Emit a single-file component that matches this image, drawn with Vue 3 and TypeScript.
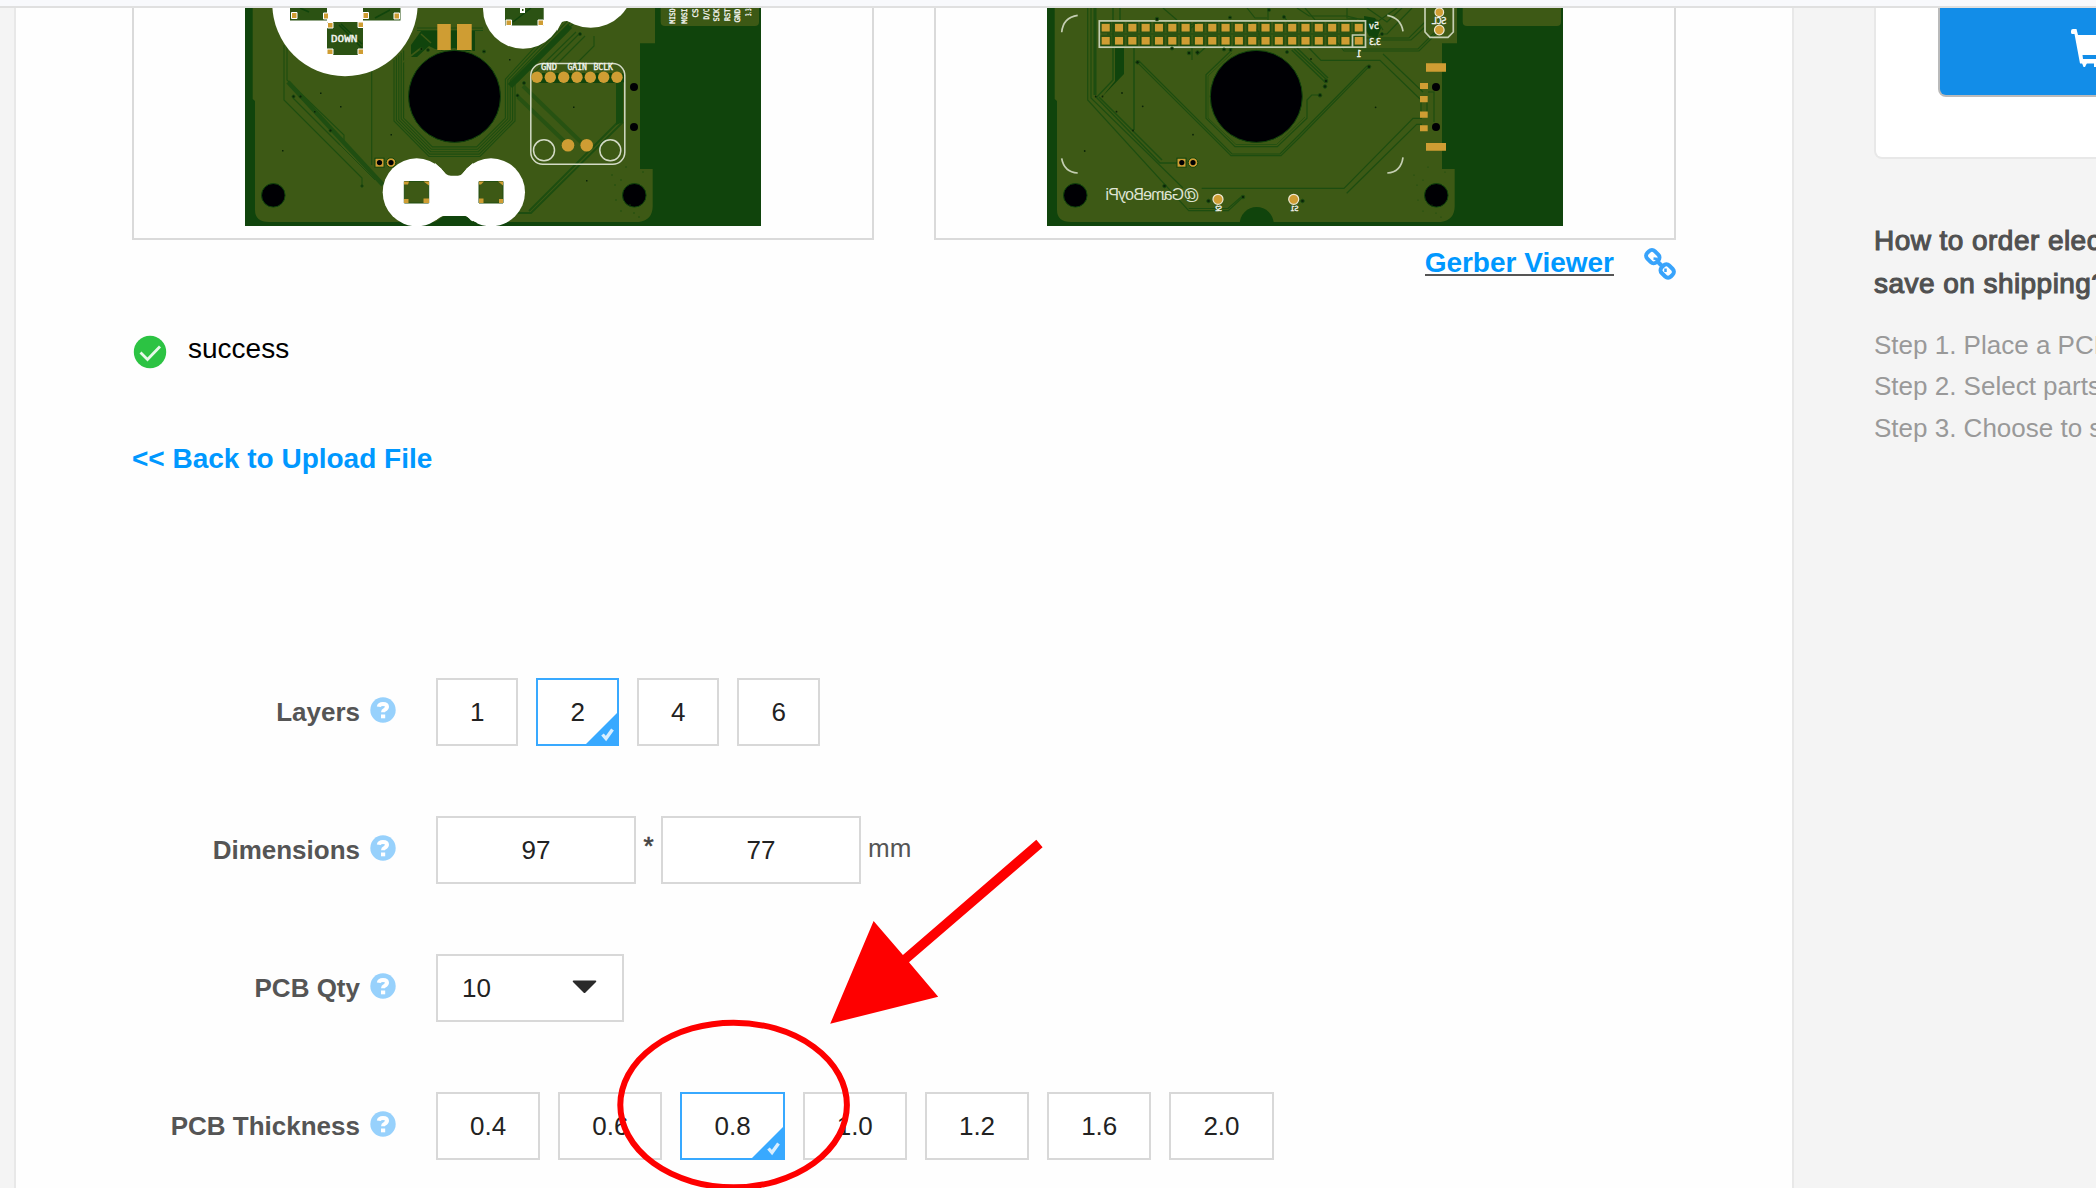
<script setup lang="ts">
interface Label { text: string; x: number; y: number; w: number }

const layers: string[] = ['1', '2', '4', '6']
const thickness: string[] = ['0.4', '0.6', '0.8', '1.0', '1.2', '1.6', '2.0']
const steps: string[] = [
  'Step 1. Place a PCB order',
  'Step 2. Select parts to buy',
  'Step 3. Choose to ship together',
]
const chosenLayer = '2'
const chosenThickness = '0.8'

const boardPath =
  'M7.7 8V99L10 101V210Q10 222 24 222H394Q407.7 220 407.7 206V169H395V43.3H410V8Z'

const octagons: string[] = [0, 2.4, 4.8, 7.2, 9.6].map(
  (d) =>
    `M${149 + d} ${60 - d}V${121 - d * 0.3}L${184 + d * 0.35} ${156.5 - d}H${235 - d * 0.35}L${270 - d} ${121 - d * 0.3}V${82 - d * 0.3}L${330 - d * 1.6} ${22 - d * 0.2}`,
)
const leftPins: string[] = ['MISO', 'MOSI', 'CS', 'D/C', 'SCK', 'RST', 'GND', '3.3']
const pinX: number[] = [430, 441.5, 452.8, 463.5, 474, 484.5, 495, 506]
const pinEnd: number[] = [23.5, 23.5, 17.5, 19.5, 21.5, 21, 22.5, 16]
const ampPads: number[] = [292, 305.3, 318.7, 332, 345.3, 358.7, 372]
const ampLabels: Label[] = [
  { text: 'GND', x: 296, y: 70.4, w: 16 },
  { text: 'GAIN', x: 322.5, y: 70.4, w: 19.5 },
  { text: 'BCLK', x: 348.5, y: 70.4, w: 19.5 },
]
const headerCols: number[] = Array.from({ length: 20 }, (_, i) => 58.7 + i * 13.32)
const vias: number[][] = [[75, 93], [95.7, 106.3], [69.5, 111.7], [37.7, 151], [146, 134.7], [86, 130.5], [48.7, 96.5], [55.5, 96.5], [264, 59], [328.6, 107.3]]
const specks: number[][] = [[367, 175], [376, 180], [370, 185], [381, 167], [398, 172], [371, 200], [376, 211], [389, 213], [394, 217], [385, 205]]
</script>

<template>
  <div class="page">
    <header class="topbar"></header>
    <div class="body">
      <main class="panel">
        <div class="boards">
          <div class="board">
            <svg width="516" height="218" viewBox="0 8 516 218">
              <rect y="8" width="516" height="218" fill="#10440c" />
              <path :d="boardPath" fill="#3d5915" />
              <path d="M415.7 8H514V22Q514 26 510 26H420Q415.7 26 415.7 22Z" fill="#3d5915" />
              <g fill="none" stroke="#1d4d10" stroke-width="1.1">
                <path v-for="o in octagons" :key="o" :d="o" />
                <path d="M126.7 70V165M39 45V100L117 178V187M42 45V80L99 135V142M48 98L95 145M172 28H238M172 30.5H238" />
                <path d="M43 82L138 185" stroke-width="4.5" stroke="#1f4e11" />
                <path d="M60 110L130 180" stroke-width="1" />
                <path d="M278 86L337 143M273 97L319 141" stroke-width="4" stroke="#275212" />
                <path d="M378 122L286 213H273M373 122L284 211" stroke-width="1.8" />
                <path d="M324 30L272 82M349 36V46L326 69M335 33L300 68M340 36L308 68M331 32L290 72" />
                <path d="M325 26L265 86" stroke-width="6" stroke="#17490f" />
              </g>
              <path d="M176 31H230V51H222L209 48L194 51L184 46L172 57H166V45Z" fill="#10440c" />
              <path d="M176 48L158 62M196 50H187L180 54M226 50L233 59H240M176 34L186 43" stroke="#3d5915" fill="none" stroke-width="1.6" />
              <rect x="288" y="73" width="92" height="10" rx="4" fill="#10440c" />
              <path d="M371 82h7v40l-7 3z" fill="#174b0f" />
              <circle cx="100" cy="3.5" r="72.7" fill="#fff" />
              <circle cx="278" cy="8.7" r="40" fill="#fff" />
              <circle cx="345.7" cy="-15" r="42.7" fill="#fff" />
              <path d="M310 8H335L331 24Q323 19 317 22Q315 25 312 31Z" fill="#fff" />
              <g fill="#2b5213">
                <path d="M45 8H82V20.5H45Z" />
                <path d="M118 8H155.5V20.5H118Z" />
                <path d="M82 22H118V55H82Z" />
                <path d="M260 8H298.7V25.5H260Z" />
              </g>
              <path d="M94 25L117 48M96 24L117 44M64 12L55 8M130 18L145 10M268 22L286 8" stroke="#10440c" stroke-width="1.5" />
              <g fill="#cf9d33" stroke="#fff" stroke-width="1">
                <path d="M46.5 12.5h5.5v6h-5.5zM78.5 13h5v6h-5zM118 12.5h5.5v6H118zM149 13h5.5v6H149zM82.5 22.5h5.5v5.5h-5.500zM113 22h5.500v5.500h-5.500zM82 49h6v5.500h-6zM113 49h5.500v5.500h-5.500zM261 20h5.500v5.500h-5.500zM293 20h5.500v5.500h-5.500z" />
              </g>
              <rect x="275" y="8" width="5" height="5" fill="#fff" /><rect x="277" y="9" width="1.500" height="2" fill="#2b5213" />
              <text x="86" y="42" class="silk" font-size="9" textLength="26.500" lengthAdjust="spacingAndGlyphs">DOWN</text>
              <path d="M192.300 24h13.500v26h-13.500zM212 24h14.700v26H212z" fill="#cf9d33" />
              <circle cx="209.500" cy="96.400" r="46" fill="#000004" stroke="#10440c" />
              <g fill="#fff">
                <circle cx="171.700" cy="192.300" r="34" />
                <circle cx="246" cy="192.300" r="34" />
                <path d="M190 163Q196 168 201 174Q203 175.700 206 175.700H213Q216 175.700 218 173Q223 167 228 163V222H226Q223 216 220 216H198Q195 217 191 220Z" />
              </g>
              <path d="M194 219.500Q197 216 200 216H219Q222 216 226 220.500L232 223H188Z" fill="#10440c" />
              <path d="M159.300 181.500h24.400V203h-24.400zM234 181.500h24V203h-24z" fill="#3d5915" stroke="#234f11" />
              <path d="M159 181.500h5l-1 3h-4zM178.500 181.500h5.500v4zM159 199h4.500v4H159zM178.500 198.500h5.500v4.500h-5.500zM234 181.500h5l-3 3h-2zM253 181.500h5v4zM234 198.500h4.500v4.500H234zM254 199h4v4h-4z" fill="#cf9d33" />
              <g fill="none" stroke="#d3dac6" stroke-width="1.500">
                <rect x="285.800" y="63.500" width="94" height="100.700" rx="12" />
                <circle cx="299" cy="150.300" r="10.500" />
                <circle cx="365.300" cy="150.300" r="10.500" />
              </g>
              <g fill="#cf9d33">
                <circle v-for="x in ampPads" :key="x" :cx="x" cy="77.300" r="5.700" />
                <circle cx="323" cy="145.300" r="6.300" />
                <circle cx="341.700" cy="145.300" r="6.300" />
              </g>
              <text v-for="l in ampLabels" :key="l.text" :x="l.x" :y="l.y" class="silk" font-size="9" :textLength="l.w" lengthAdjust="spacingAndGlyphs">{{ l.text }}</text>
              <text v-for="(p, i) in leftPins" :key="p" class="silk" font-size="7.500" :textLength="pinEnd[i] - 8.6" lengthAdjust="spacingAndGlyphs" :transform="`translate(${pinX[i]} ${pinEnd[i]}) rotate(-90)`">{{ p }}</text>
              <g class="holes">
                <rect x="130" y="158.200" width="9" height="9" fill="#cf9d33" stroke="#10440c" />
                <circle cx="146" cy="162.600" r="4.800" fill="#cf9d33" stroke="#10440c" />
                <circle cx="134.500" cy="162.600" r="2.600" />
                <circle cx="146" cy="162.600" r="2.600" />
                <circle cx="28.300" cy="195.300" r="11.800" stroke="#10440c" />
                <circle cx="389.300" cy="195.300" r="11.800" stroke="#10440c" />
                <circle cx="389" cy="87" r="4" />
                <circle cx="389" cy="127" r="4" />
                <circle v-for="s in specks" :key="s[0]" :cx="s[0]" :cy="s[1]" r=".7" fill="#164a0d" />
                <path d="M75 92.500h1.500v1.500H75zM95 106h1.500v1.500H95zM69 111h1.500v1.500H69zM37 150h1.500v1.500H37zM145.500 134h1.500v1.500h-1.500zM328 106.500h1.500v1.500H328zM341 180h1.500v1.500H341zM264 59h1.500v1.500H264z" fill="#0b2408" />
              </g>
              <g fill="#0b2408" stroke="#1d4d10">
                <circle cx="48.500" cy="96.500" r="1.500" /><circle cx="55.500" cy="96.500" r="1.500" /><circle cx="85.500" cy="130.500" r="1.500" />
                <circle cx="117" cy="186" r="1.200" /><circle cx="176.500" cy="49" r="1.500" /><circle cx="183" cy="50" r="1.500" /><circle cx="239" cy="51.500" r="1.500" />
                <circle cx="279" cy="83" r="1.500" /><circle cx="272.500" cy="95.500" r="1.500" /><circle cx="335" cy="34" r="1.500" />
              </g>
            </svg>
          </div>
          <div class="board">
            <svg width="516" height="218" viewBox="0 8 516 218">
              <rect y="8" width="516" height="218" fill="#10440c" />
              <path :d="boardPath" fill="#3d5915" />
              <path d="M415.700 8H514V22Q514 26 510 26H420Q415.700 26 415.700 22Z" fill="#3d5915" />
              <g fill="none" stroke="#1d4d10" stroke-width="1.200">
                <path d="M40.700 8V100L141.700 210.700H181.300L196 197M141.700 208.500H181L194 197" />
                <path d="M44 8V98L136 188" />
                <path d="M48 8V95" stroke-width="3" />
                <path d="M50 98L113 163H130M52 97L115 160" stroke-width="1.500" />
                <path d="M66 8V80L49 98M73 8V20M87 48V130" stroke-width="1.500" />
                <path d="M90.300 62.300L184 155.700H234L253 137L322 66.700M91.500 60.500L185 154H233L252 135L320 66" />
                <path d="M183 51.700L159 74.700V118.300L188 146.700H230.300L260 118.300V100L264.700 95H273" />
                <path d="M185 53L161 76V118L189 144.500H229.500L258 117" stroke-width=".7" />
                <path d="M154.700 188.300H297L366 118.300H375M299.700 193.300L369.700 124.300H375" />
                <path d="M244.700 50L278 82M247 49L280 80M250 48L281 78" stroke-width="1.500" />
                <path d="M261 47L274 60.300H333L373 99M336 54L376 92M290 42L297 51H372L390 33M297 49H371L388 32" />
                <path d="M333 40H364L378 27M300 38H362L378 22M381 92L387 92V122M374 100V112M380 100V112" />
                <path d="M144 28L151 22H202L212 32V40M143 25L151 22M116 8L130 20M221 8V20M258 8L268 20H310M236 15L245 28M200 8L208 18H220" />
                <path d="M320 8L340 22L355 8M300 8V18L330 20L336 30M365 8L340 34H334L326 40M250 8L262 16H300L316 20M145 44V60M160 46L150 55M188 42L184 50M350 8L330 22H290" />
                <path d="M60 34H312" />
                <path v-for="x in headerCols" :key="x" :d="`M${x - 5} 22.500h10v9.500h-10zM${x - 5} 36h10v9.500h-10z`" />
              </g>
              <path d="M68 48H77V74L54 98L68 81Z" fill="#10440c" />
              <path d="M317 16L328 18L334 28L330 38L322 36L318 28Z" fill="#10440c" />
              <path d="M192.700 224A17 17 0 0 1 226.700 224Z" fill="#10440c" />
              <circle cx="209.300" cy="96.400" r="46" fill="#000004" stroke="#10440c" />
              <g fill="none" stroke="#c4ceb2" stroke-width="1.700">
                <rect x="52.300" y="20.900" width="266.200" height="26.300" />
                <path d="M305.500 47V35H318.500" />
                <path d="M14.700 32.300Q16 17.500 30.700 15.300M14.700 158.300Q17 172 30.700 173M340.300 15.300Q354 18 356 31.300M356 157.300Q354 172 340.300 173" />
                <path d="M378 8V32L383 37.300H401L406.300 32V8" />
              </g>
              <g fill="#cf9d33">
                <path v-for="x in headerCols" :key="x" :d="`M${x - 4} 24h8v7.500h-8zM${x - 4} 37h8v7.500h-8z`" />
                <path d="M379 63.300h20v8.400h-20zM379 143h20v7.700h-20zM373 83h8v6h-8zM373 96h7.700v6.200H373zM373 111.500h7.700v6.200H373zM373 125.300h7.700v6H373z" />
              </g>
              <g fill="#cf9d33" stroke="#eee8d2" stroke-width="1.200">
                <circle cx="392.300" cy="12.300" r="4.300" /><circle cx="392.300" cy="30" r="4.800" />
                <circle cx="171" cy="199.300" r="5" /><circle cx="246.700" cy="199.300" r="5" />
              </g>
              <text class="silk label" transform="translate(152.500 199.500) scale(-1 1)" font-size="16" textLength="94" lengthAdjust="spacing">@GameBoyPi</text>
              <text class="silk" transform="translate(332 29) scale(-1 1)" font-size="8.500">5v</text>
              <text class="silk" transform="translate(334 44.500) scale(-1 1)" font-size="8.500" textLength="12">3.3</text>
              <text class="silk" transform="translate(314.500 56.500) scale(-1 1)" font-size="8">1</text>
              <text class="silk" transform="translate(399.500 24) scale(-1 1)" font-size="9" textLength="15">SCL</text>
              <text class="silk" transform="translate(175 210.500) scale(-1 1)" font-size="7" textLength="7">S2</text>
              <text class="silk" transform="translate(251.500 210.500) scale(-1 1)" font-size="7" textLength="8">S1</text>
              <g class="holes">
                <rect x="130" y="158.200" width="9" height="9" fill="#cf9d33" stroke="#10440c" />
                <circle cx="146" cy="162.600" r="4.800" fill="#cf9d33" stroke="#10440c" />
                <circle cx="134.800" cy="162.600" r="2.600" />
                <circle cx="146" cy="162.600" r="2.600" />
                <circle cx="28.300" cy="195.300" r="11.800" stroke="#10440c" />
                <circle cx="389.300" cy="195.300" r="11.800" stroke="#10440c" />
                <circle cx="389" cy="87" r="4" />
                <circle cx="389" cy="127" r="4" />
                <circle v-for="s in specks" :key="s[0]" :cx="s[0]" :cy="s[1]" r=".6" fill="#164a0d" />
                <circle v-for="v in vias" :key="v[0]" :cx="v[0]" :cy="v[1]" r=".9" fill="#0b2408" />
              </g>
              <g fill="#0b2408" stroke="#1d4d10">
                <circle cx="90.500" cy="62.300" r="1.800" /><circle cx="322" cy="66.700" r="1.800" /><circle cx="279" cy="81" r="1.800" /><circle cx="278" cy="86.500" r="1.800" />
                <circle cx="273" cy="95.300" r="1.800" /><circle cx="117.500" cy="186" r="1.800" /><circle cx="161.500" cy="201" r="1.800" /><circle cx="255.500" cy="201" r="1.800" /><circle cx="196" cy="197" r="1.800" />
                <circle cx="150.500" cy="52.500" r="1.800" /><circle cx="142" cy="53" r="1.800" /><circle cx="125" cy="48.500" r="1.500" /><circle cx="177" cy="49.500" r="1.500" /><circle cx="183.500" cy="50" r="1.500" /><circle cx="240" cy="52" r="1.500" />
                <circle cx="110" cy="19" r="1.800" /><circle cx="183" cy="17.500" r="1.500" /><circle cx="237" cy="17" r="1.500" /><circle cx="222" cy="10" r="1.500" /><circle cx="335" cy="34" r="1.500" />
              </g>
            </svg>
          </div>
        </div>

        <div class="viewer">
          <a class="viewer-link">Gerber Viewer</a>
          <svg class="chain" width="34" height="34" viewBox="-1 -1 34 34" fill="none" stroke="#38a3fb" stroke-width="4">
            <rect x="-6.500" y="-5.300" width="13" height="10.600" rx="4" transform="translate(8.800 8.600) rotate(45)" />
            <rect x="-6.500" y="-5.300" width="13" height="10.600" rx="4" transform="translate(23.200 23) rotate(45)" />
            <path d="M9.500 10.500L13.500 11M21.500 20.500V24" stroke-width="2.500" />
            <path d="M13.500 13.500L18.500 18.500" />
          </svg>
        </div>

        <div class="status">
          <svg width="34" height="34" viewBox="0 0 34 34">
            <circle cx="17" cy="17" r="16.200" fill="#2cc343" />
            <path d="M7.500 17.500L14.500 24.500L27 11.500" fill="none" stroke="#e6f9e9" stroke-width="2.800" />
          </svg>
          <span>success</span>
        </div>

        <a class="back">&lt;&lt; Back to Upload File</a>

        <div class="form">
          <div class="row">
            <span class="name">Layers</span>
            <svg class="help" viewBox="0 0 26 26"><circle cx="13" cy="13" r="12.700" /><path d="M8.800 9.800Q9.200 6.900 13 6.900Q17 6.900 17 9.800Q17 11.500 14.800 12.700Q13 13.600 13 15.200" /><rect x="11" y="17.500" width="4.200" height="3.800" /></svg>
            <div class="options small">
              <button v-for="o in layers" :key="o" class="opt" :class="{ on: o === chosenLayer }">
                {{ o }}
                <svg v-if="o === chosenLayer" class="corner" viewBox="0 0 33 33"><path d="M33 0V33H0Z" fill="#38a9ff" /><path d="M17.500 22.500L21 26.500L27.500 17.500" fill="none" stroke="#d8eeff" stroke-width="3.400" /></svg>
              </button>
            </div>
          </div>
          <div class="row">
            <span class="name">Dimensions</span>
            <svg class="help" viewBox="0 0 26 26"><circle cx="13" cy="13" r="12.700" /><path d="M8.800 9.800Q9.200 6.900 13 6.900Q17 6.900 17 9.800Q17 11.500 14.800 12.700Q13 13.600 13 15.200" /><rect x="11" y="17.500" width="4.200" height="3.800" /></svg>
            <div class="field">97</div>
            <span class="times">*</span>
            <div class="field">77</div>
            <span class="unit">mm</span>
          </div>
          <div class="row">
            <span class="name">PCB Qty</span>
            <svg class="help" viewBox="0 0 26 26"><circle cx="13" cy="13" r="12.700" /><path d="M8.800 9.800Q9.200 6.900 13 6.900Q17 6.900 17 9.800Q17 11.500 14.800 12.700Q13 13.600 13 15.200" /><rect x="11" y="17.500" width="4.200" height="3.800" /></svg>
            <div class="select">
              <span>10</span>
              <svg width="25" height="14" viewBox="0 0 25 14"><path d="M1.500 .500H23.500Q25 .500 24 2L13.500 12.500Q12.500 13.500 11.500 12.500L1 2Q0 .500 1.500 .500Z" fill="#2a2a2a" /></svg>
            </div>
          </div>
          <div class="row">
            <span class="name">PCB Thickness</span>
            <svg class="help" viewBox="0 0 26 26"><circle cx="13" cy="13" r="12.700" /><path d="M8.800 9.800Q9.200 6.900 13 6.900Q17 6.900 17 9.800Q17 11.500 14.800 12.700Q13 13.600 13 15.200" /><rect x="11" y="17.500" width="4.200" height="3.800" /></svg>
            <div class="options wide">
              <button v-for="o in thickness" :key="o" class="opt" :class="{ on: o === chosenThickness }">
                {{ o }}
                <svg v-if="o === chosenThickness" class="corner" viewBox="0 0 33 33"><path d="M33 0V33H0Z" fill="#38a9ff" /><path d="M17.500 22.500L21 26.500L27.500 17.500" fill="none" stroke="#d8eeff" stroke-width="3.400" /></svg>
              </button>
            </div>
          </div>
        </div>
      </main>

      <aside class="side">
        <div class="card">
          <div class="cart-btn">
            <svg width="60" height="40" viewBox="0 0 60 40">
              <path d="M0 2Q0 0 2 0H5.500L7 6H56L50 26H11.500L12 30H50V34.500H9L3.500 5H1.500Q0 5 0 3.500Z" fill="#fff" />
              <path d="M11 34h5L14 38h-1.500zM42 34h5l-2 4h-1.500zM23 34h4v4h-4z" fill="#fff" />
            </svg>
          </div>
        </div>
        <h2>How to order electronic parts &amp;<br />save on shipping?</h2>
        <p v-for="s in steps" :key="s">{{ s }}</p>
      </aside>
    </div>

    <svg class="markup" width="2096" height="1188" viewBox="0 0 2096 1188">
      <ellipse cx="733.600" cy="1105" rx="113.300" ry="82.300" fill="none" stroke="#fe0000" stroke-width="6" />
      <path d="M1036.300 839.800L1042.600 847.300L909 962.300L938.200 996.700L830.200 1023.800L873.600 921L902.900 955Z" fill="#fe0000" />
    </svg>
  </div>
</template>

<style>
body {
  margin: 0;
  background: #f4f4f4;
  overflow: hidden;
}
</style>

<style scoped>
.page {
  position: relative;
  width: 2096px;
  height: 1188px;
  overflow: hidden;
  background: #f4f4f4;
  font-family: "Liberation Sans", Arial, sans-serif;
}
.topbar {
  height: 6px;
  background: #f8f9fc;
  border-bottom: 2px solid #e0e0e0;
}
.body {
  display: flex;
  height: 1180px;
}
.panel {
  box-sizing: border-box;
  flex: none;
  width: 1780px;
  margin-left: 14px;
  border: solid #e8e8e8;
  border-width: 0 2px;
  background: #fefefe;
}
.boards {
  display: flex;
  gap: 60px;
  margin-left: 116px;
}
.board {
  box-sizing: border-box;
  width: 742px;
  height: 232px;
  padding-left: 111px;
  border: 2px solid #dadada;
  border-top: 0;
}
.board svg {
  display: block;
}
.silk {
  font-family: "DejaVu Sans Mono", monospace;
  fill: #f4f5f0;
  stroke: #f4f5f0;
  stroke-width: 0.350px;
}
.silk.label {
  font-family: "Liberation Sans", sans-serif;
  fill: #dfe4d4;
  stroke: none;
}
.holes {
  fill: #000004;
}
.viewer {
  display: flex;
  justify-content: flex-end;
  height: 40px;
  margin: 2px 115px 0 0;
}
.viewer-link {
  height: 32px;
  border-bottom: 2px solid #555;
  color: #0098ff;
  font-size: 28px;
  font-weight: bold;
  line-height: 41px;
}
.chain {
  margin: 5px 0 0 29px;
}
.status {
  display: flex;
  height: 40px;
  margin: 46px 0 0 117px;
  color: #000;
  font-size: 28px;
  line-height: 42px;
}
.status svg {
  margin: 7px 21px 0 0;
}
.back {
  display: block;
  height: 40px;
  margin: 70px 0 0 116px;
  color: #0098ff;
  font-size: 28px;
  font-weight: bold;
  line-height: 42px;
}
.form {
  display: flex;
  flex-direction: column;
  gap: 70px;
  margin-top: 200px;
  color: #222;
  font-size: 26px;
  line-height: 68px;
}
.row {
  display: flex;
  height: 68px;
}
.name {
  width: 344px;
  color: #555;
  font-weight: bold;
  text-align: right;
}
.help {
  width: 26px;
  height: 26px;
  margin: 19px 40px 0 10px;
  fill: #97d1fc;
}
.help path {
  fill: none;
  stroke: #fff;
  stroke-width: 4px;
}
.help rect {
  fill: #fff;
}
.options {
  display: flex;
  gap: 18.100px;
}
.opt {
  position: relative;
  box-sizing: border-box;
  height: 68px;
  padding: 0;
  border: 2px solid #d8d8d8;
  background: #fff;
  color: #222;
  font: 26px/64px "Liberation Sans", Arial, sans-serif;
  text-align: center;
}
.small .opt {
  width: 82.400px;
}
.wide .opt {
  width: 104.150px;
}
.opt.on {
  border-color: #38a9ff;
}
.corner {
  position: absolute;
  right: -1px;
  bottom: -1px;
  width: 33px;
  height: 33px;
}
.field,
.select {
  box-sizing: border-box;
  height: 68px;
  border: 2px solid #d8d8d8;
  background: #fff;
  line-height: 64px;
}
.field {
  width: 200px;
  text-align: center;
}
.times {
  width: 25px;
  margin-top: -4px;
  color: #444;
  text-align: center;
  -webkit-text-stroke: 0.600px #444;
}
.unit {
  margin: -2px 0 0 7px;
  color: #555;
}
.select {
  display: flex;
  justify-content: space-between;
  width: 188px;
  padding: 0 25px 0 24px;
}
.select svg {
  margin-top: 24px;
}
.side {
  flex: none;
  width: 222px;
  padding-left: 80px;
}
.card {
  box-sizing: border-box;
  width: 500px;
  height: 151px;
  border: 2px solid #e8e8e8;
  border-top: 0;
  border-radius: 0 0 8px 8px;
  background: #fff;
}
.cart-btn {
  box-sizing: border-box;
  width: 370px;
  height: 89px;
  margin-left: 62px;
  padding: 21px 0 0 131px;
  border: 2px solid #bababa;
  border-top: 0;
  border-radius: 0 0 8px 8px;
  background: #128de8;
}
.side h2 {
  margin: 59.500px 0 0;
  color: #505050;
  font-size: 28px;
  font-weight: normal;
  letter-spacing: 0.450px;
  line-height: 43px;
  white-space: nowrap;
  -webkit-text-stroke: 1.100px #505050;
}
.side p {
  margin: 0;
  color: #999;
  font-size: 26px;
  line-height: 41.500px;
  white-space: nowrap;
}
.side h2 + p {
  margin-top: 20px;
}
.markup {
  position: absolute;
  top: 0;
  left: 0;
  pointer-events: none;
}
</style>
